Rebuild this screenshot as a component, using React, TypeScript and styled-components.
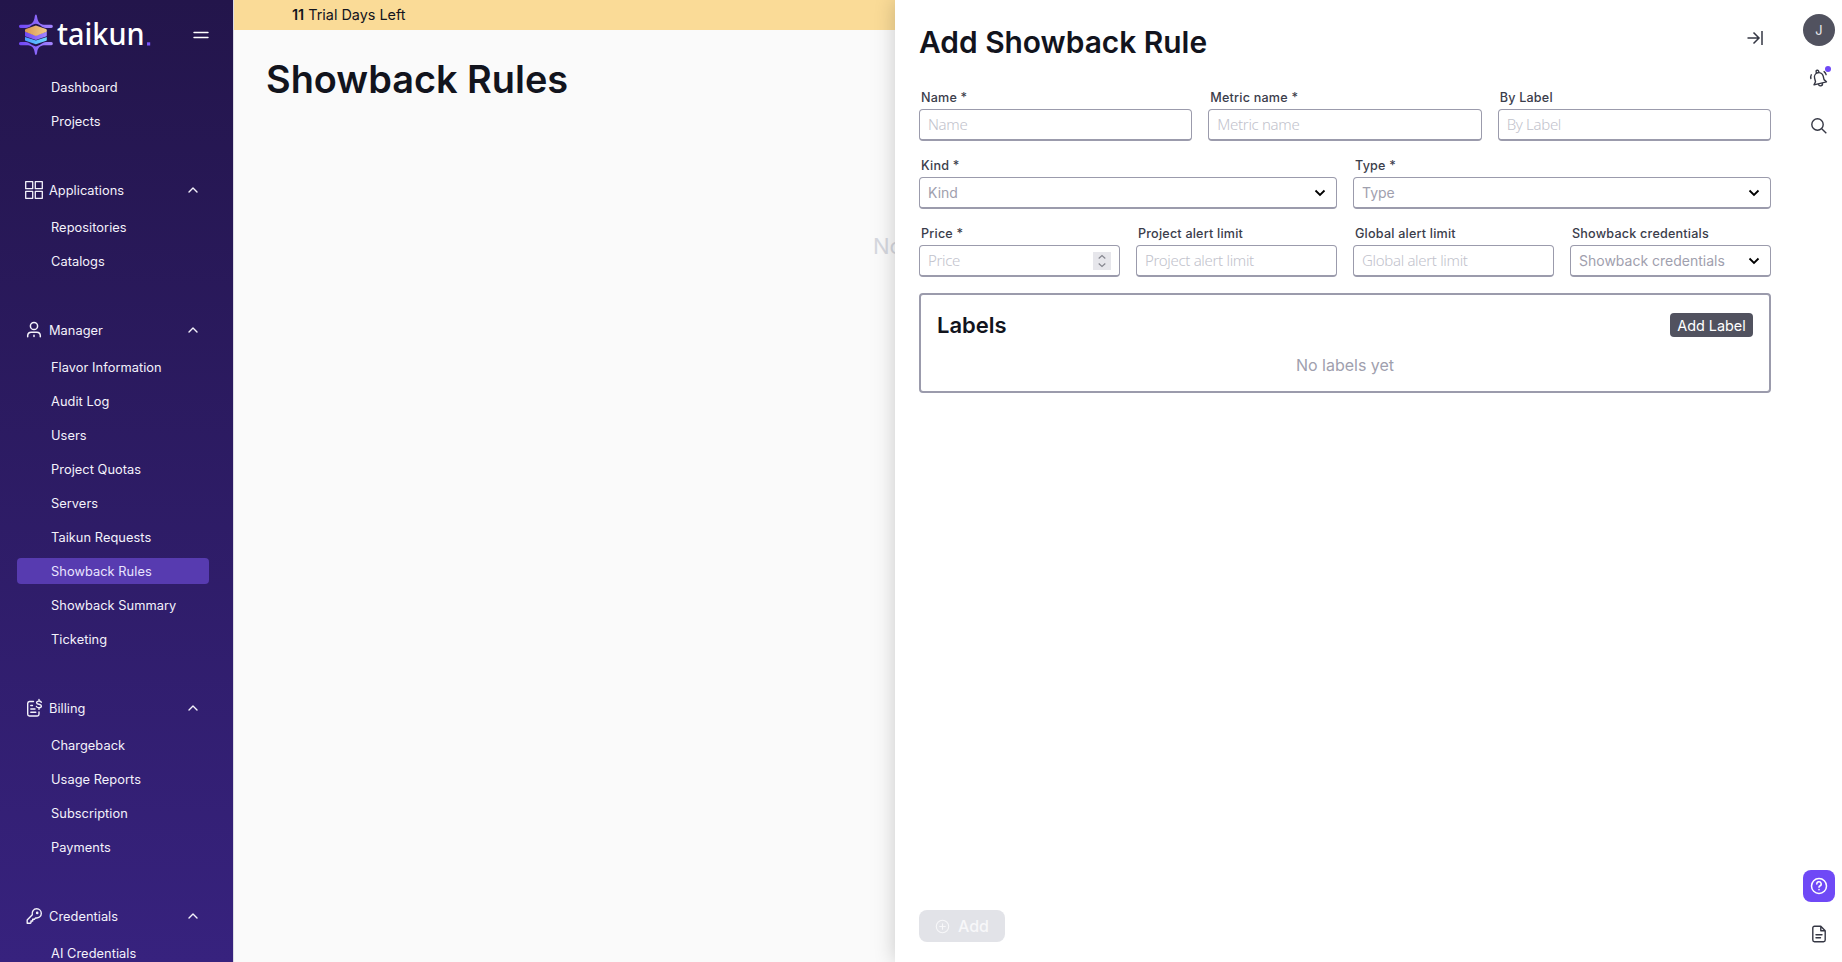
import React from 'react';
import styled, { createGlobalStyle, css } from 'styled-components';

const Global = createGlobalStyle`
  *, *::before, *::after { box-sizing: border-box; }
  html, body { margin: 0; padding: 0; }
  body { font-family: Inter, "Liberation Sans", sans-serif; color: #12141d; overflow: hidden; }
  button, input { font-family: inherit; }
`;

const Shell = styled.div`
  display: flex;
  width: 100%;
  height: 100vh;
  overflow: hidden;
  background: #fafafa;
`;

const Sidebar = styled.aside`
  flex: 0 0 234px;
  height: 100vh;
  overflow: hidden;
  border-right: 1px solid #dcdce4;
  background: linear-gradient(180deg, #23154b 0%, #37227e 100%);
  color: #fff;
`;

const Brand = styled.div`
  display: flex;
  align-items: center;
  justify-content: space-between;
  height: 74px;
  padding: 0 24px 4px 17px;
`;

const NavList = styled.nav`
  display: flex;
  flex-direction: column;
  gap: 8px;
  padding: 0 24px 0 17px;
  margin-bottom: 43px;
`;

const NavItem = styled.a<{ $active?: boolean }>`
  display: flex;
  align-items: center;
  height: 26px;
  padding-left: 34px;
  border-radius: 4px;
  font-size: 12.8px;
  letter-spacing: 0.06px;
  color: ${(p) => (p.$active ? '#e9e4ff' : '#f4f2fb')};
  background: ${(p) => (p.$active ? '#573bb0' : 'transparent')};
  white-space: nowrap;
`;

const SectionHead = styled.div`
  display: flex;
  align-items: center;
  height: 26px;
  margin-bottom: 11px;
  padding: 0 34px 0 24px;
  font-size: 12.8px;
  letter-spacing: 0.04px;
  color: #f4f2fb;

  > svg:first-child { flex: none; margin-right: 5px; }
  > svg:last-child { flex: none; margin-left: auto; }
`;

const Content = styled.main`
  flex: 1;
  min-width: 0;
  display: flex;
  flex-direction: column;
`;

const TrialBar = styled.div`
  flex: none;
  height: 30px;
  padding-left: 58px;
  background: #fadb97;
  font-size: 14.4px;
  line-height: 30px;
  b { font-weight: 600; }
`;

const PageTitle = styled.h1`
  margin: 23px 0 0 32px;
  font-size: 37.9px;
  line-height: 52px;
  font-weight: 600;
`;

const EmptyNote = styled.p`
  margin: 123px 0 0;
  padding-left: 639px;
  font-size: 22px;
  line-height: 36px;
  color: #d5d7de;
  white-space: nowrap;
  overflow: hidden;
`;

const Drawer = styled.section`
  position: absolute;
  top: 0;
  right: 0;
  width: 947px;
  height: 100vh;
  display: flex;
  background: #fff;
  box-shadow: 0 0 20px rgba(0, 0, 0, 0.2);
`;

const DrawerBody = styled.div`
  flex: 1;
  min-width: 0;
  display: flex;
  flex-direction: column;
  padding: 24px 0 20px 24px;
`;

const DrawerHead = styled.header`
  display: flex;
  justify-content: space-between;
  height: 66px;
  padding-right: 4px;
  > svg { margin-top: 2px; }
`;

const DrawerTitle = styled.h2`
  margin: 0;
  font-size: 29.9px;
  line-height: 36px;
  font-weight: 600;
`;

const FieldRow = styled.div<{ $cols: number }>`
  display: grid;
  grid-template-columns: repeat(${(p) => p.$cols}, minmax(0, 1fr));
  column-gap: 16px;
  height: 51px;
  margin-bottom: 17px;
  &:nth-of-type(3) { margin-bottom: 16px; }
`;

const FieldLabel = styled.label`
  display: block;
  height: 19px;
  padding-left: 2px;
  font-size: 12.6px;
  line-height: 16px;
  font-weight: 500;
  letter-spacing: 0.2px;
  color: #3b3d4b;
`;

const Control = styled.div`
  display: flex;
  align-items: center;
  justify-content: space-between;
  height: 32px;
  padding: 0 7px 0 8px;
  border: 1px solid #9b9bac;
  border-bottom-width: 2px;
  border-radius: 4px;
  background: #fff;
`;

const TextInput = styled.input`
  flex: 1;
  min-width: 0;
  height: 26px;
  padding: 0 0 2px;
  border: 0;
  outline: 0;
  background: transparent;
  font: 300 15px "Noto Sans", "Open Sans", sans-serif;
  letter-spacing: -0.32px;
  &::placeholder { color: #c1c2cc; opacity: 1; }
`;

const SelectValue = styled.span`
  font-size: 14px;
  color: #9fa0ae;
`;

const Spinner = styled.span`
  display: grid;
  place-items: center;
  width: 18px;
  height: 18px;
  margin-right: 1px;
  background: #e6e6eb;
`;

const LabelsBox = styled.section`
  height: 100px;
  padding: 18px 16px 0;
  border: 2px solid #9b9bac;
  border-radius: 4px;
`;

const LabelsHead = styled.div`
  display: flex;
  justify-content: space-between;
  h3 { margin: 0; font-size: 22px; line-height: 24px; font-weight: 600; }
`;

const SmallButton = styled.button`
  height: 24px;
  width: 83px;
  padding: 0;
  border: 0;
  border-radius: 4px;
  background: #51525f;
  color: #fff;
  font-size: 14.4px;
  font-weight: 400;
`;

const NoLabels = styled.p`
  margin: 16px 0 0;
  text-align: center;
  font-size: 16px;
  line-height: 24px;
  color: #9fa0ae;
`;

const AddButton = styled.button`
  display: flex;
  align-items: center;
  gap: 8px;
  width: 86px;
  height: 32px;
  margin-top: auto;
  padding: 0 0 0 16px;
  border: 0;
  border-radius: 8px;
  background: #e2e3e8;
  color: #f7f7f9;
  font-size: 16px;
  font-weight: 500;
`;

const Rail = styled.aside`
  flex: 0 0 71px;
  display: flex;
  flex-direction: column;
  align-items: flex-end;
  padding: 14px 7px 12px 0;
`;

const Avatar = styled.div`
  display: grid;
  place-items: center;
  width: 32px;
  height: 32px;
  border-radius: 50%;
  background: #51525f;
  color: #e9e9ee;
  font-size: 12.8px;
`;

const RailIcon = styled.div<{ $filled?: boolean; $push?: boolean }>`
  position: relative;
  display: grid;
  place-items: center;
  width: 32px;
  height: 32px;
  margin-top: ${(p) => (p.$push ? 'auto' : '16px')};
  ${(p) => p.$filled && css`background: #6f49f6; border-radius: 8px;`}
`;

const Dot = styled.i`
  position: absolute;
  top: 4px;
  right: 4px;
  width: 6px;
  height: 6px;
  border-radius: 50%;
  background: #6f49f6;
`;

const Logo = () => (
  <svg width="136" height="46" viewBox="0 0 136 46">
    <defs>
      <linearGradient id="wing" x1="0" x2="1"><stop offset="0" stopColor="#7047f5" /><stop offset="1" stopColor="#a486ff" /></linearGradient>
      <linearGradient id="gold" x1="0" x2="1"><stop offset="0" stopColor="#d99753" /><stop offset="1" stopColor="#f3cd86" /></linearGradient>
      <linearGradient id="sky" x1="0" x2="1"><stop offset="0" stopColor="#4b9bff" /><stop offset="1" stopColor="#6bd8ff" /></linearGradient>
    </defs>
    <path d="M3.500 12.800H11C15 12.500 17 9.500 17.600 5.500C17.900 3.500 18.200 2.500 18.900 2.500S19.900 3.500 20.200 5.500C20.800 9.500 22.800 12.500 26.800 12.800H34.300C36.300 12.800 36.300 16 34.300 16H29C25 15.800 22.500 11.800 18.900 11.700C15.300 11.800 12.800 15.800 8.800 16H3.500C1.500 16 1.500 12.800 3.500 12.800Z" fill="url(#wing)" />
    <path d="M3.500 33.300H11C15 33.600 17 36.100 17.600 40.100C17.900 42.100 18.200 43.100 18.900 43.100S19.900 42.100 20.200 40.100C20.800 36.100 22.800 33.600 26.800 33.300H34.300C36.300 33.300 36.300 30.100 34.300 30.100H29C25 30.300 22.500 34.300 18.900 34.400C15.300 34.300 12.800 30.300 8.800 30.100H3.500C1.500 30.100 1.500 33.300 3.500 33.300Z" fill="url(#wing)" />
    <path d="M8 25L18.900 28.500L29.800 25V28Q29.800 28.500 29.300 28.800L18.900 32.300L8.500 28.800Q8 28.500 8 28Z" fill="url(#sky)" />
    <path d="M8 19.500L18.900 23.500L29.800 19.500V23.500Q29.800 24.300 29 24.600L18.900 28L8.800 24.600Q8 24.300 8 23.500Z" fill="url(#wing)" />
    <path d="M18.900 13.600L29 16.900Q29.800 17.200 29.800 18V19Q29.800 19.800 29 20.100L18.900 23.900L8.800 20.100Q8 19.800 8 19V18Q8 17.200 8.800 16.900Z" fill="url(#gold)" />
    <text x="40" y="33.300" fill="#fff" fontFamily="'Noto Sans', sans-serif" fontWeight="500" fontSize="30" textLength="87.500" lengthAdjust="spacingAndGlyphs">taikun</text>
    <rect x="130" y="30.300" width="3.200" height="3.200" fill="#7c55fb" />
  </svg>
);

const stroke = { fill: 'none', stroke: 'currentColor', strokeLinecap: 'round', strokeLinejoin: 'round' } as const;

const MenuIcon = () => (
  <svg width="16" height="10" viewBox="0 0 16 10" {...stroke} strokeWidth="1.4"><path d="M1 2.500H15M1 7.500H15" /></svg>
);
const Caret = () => (
  <svg width="12" height="8" viewBox="0 0 12 8" {...stroke} strokeWidth="1.400"><path d="M2 6L6 2L10 6" /></svg>
);
const ChevronDown = () => (
  <svg width="18" height="10" viewBox="0 0 18 10" fill="none" stroke="#000" strokeWidth="1.800"><path d="M4.500 2.500L9 7L13.500 2.500" /></svg>
);
const GridIcon = () => (
  <svg width="20" height="20" viewBox="0 0 20 20" {...stroke} strokeWidth="1.300">
    {[[1.700, 1.700], [11.300, 1.700], [1.700, 11.300], [11.300, 11.300]].map(([x, y]) => <rect key={`${x}-${y}`} x={x} y={y} width="7" height="7" />)}
  </svg>
);
const PersonIcon = () => (
  <svg width="20" height="20" viewBox="0 0 20 20" {...stroke} strokeWidth="1.500">
    <circle cx="10" cy="6" r="3.600" /><path d="M3.700 16.700V15.500A3.500 3.500 0 0 1 7.200 12.200H12.800A3.500 3.500 0 0 1 16.300 15.500V16.700M10 15.300V16.500" />
  </svg>
);
const BillIcon = () => (
  <svg width="20" height="20" viewBox="0 0 20 20" {...stroke} strokeWidth="1.400">
    <path d="M9.500 3.500H5.500A2 2 0 0 0 3.700 5.500V16.300A1.700 1.700 0 0 0 5.400 18H13.300A1.700 1.700 0 0 0 15 16.300V14M6.800 7.500H8.500M6.800 11H11M6.800 14.300H11.800" />
    <path d="M17.300 4.300C16.800 2.600 12.600 2.600 12.600 4.700C12.600 6.900 17.400 5.700 17.400 8.100C17.400 10.200 13 10.200 12.400 8.400M15 1.500V3M15 9.800V11.300" />
  </svg>
);
const KeyIcon = () => (
  <svg width="20" height="20" viewBox="0 0 20 20" {...stroke} strokeWidth="1.400">
    <path d="M8.300 8.800C7.500 5.500 9.700 2.800 12.700 2.800A4.700 4.700 0 0 1 17.300 7.500C17.300 10.500 14.500 12.500 11.600 11.900L10.400 13.300H8.700V15H7V16.700L6.300 17.300H3.200V14Z" /><circle cx="13.200" cy="6.900" r=".6" />
  </svg>
);
const CollapseIcon = () => (
  <svg width="24" height="24" viewBox="0 0 24 24" fill="none" stroke="#353744" strokeWidth="1.500"><path d="M4.500 12H16.500M10.500 6.500L16 12L10.500 17.500M19 5V19" /></svg>
);
const SpinIcon = () => (
  <svg width="10" height="14" viewBox="0 0 10 14" fill="none" stroke="#85868f" strokeWidth="1.200"><path d="M1.700 4.500L5 1.500L8.300 4.500M1.700 9.500L5 12.500L8.300 9.500" /></svg>
);
const PlusCircle = () => (
  <svg width="15" height="15" viewBox="0 0 15 15" {...stroke} strokeWidth="1.100"><circle cx="7.500" cy="7.500" r="6.200" /><path d="M4.700 7.500H10.300M7.500 4.700V10.300" /></svg>
);
const BellIcon = () => (
  <svg width="20" height="20" viewBox="0 0 20 20" fill="none" stroke="#353744" strokeWidth="1.400" strokeLinecap="round" strokeLinejoin="round">
    <g transform="rotate(-14 10 10)">
      <path d="M3.500 15.500H16.300L14.500 12.800V9A4.400 4.400 0 0 0 5.700 9V12.800ZM8.700 4.500V3.300A1.300 1.300 0 0 1 11.300 3.300V4.500M8 16A2 2 0 0 0 12 16M3.300 5Q2 6.500 2 8.500M16.500 5Q17.700 6.500 17.700 8.500" />
    </g>
  </svg>
);
const SearchIcon = () => (
  <svg width="20" height="20" viewBox="0 0 20 20" fill="none" stroke="#353744" strokeWidth="1.400"><circle cx="8.500" cy="8.500" r="5.700" /><path d="M12.700 12.800L17.300 17.200" /></svg>
);
const HelpIcon = () => (
  <svg width="20" height="20" viewBox="0 0 20 20" {...stroke} stroke="#fff" strokeWidth="1.500"><circle cx="10" cy="10" r="7.500" /><path d="M7.800 8A2.200 2.200 0 1 1 10.800 10Q10 10.400 10 11.300M10 13.600V13.700" /></svg>
);
const FileIcon = () => (
  <svg width="20" height="20" viewBox="0 0 20 20" {...stroke} stroke="#353744" strokeWidth="1.400"><path d="M11.800 2.300H5.500A1.700 1.700 0 0 0 3.800 4V16A1.700 1.700 0 0 0 5.500 17.700H14.500A1.700 1.700 0 0 0 16.200 16V6.700ZM11.800 2.500V6.700H16M7 10.800H13M7 13.800H11.500" /></svg>
);

const sections = [
  { title: 'Applications', icon: <GridIcon />, items: ['Repositories', 'Catalogs'] },
  { title: 'Manager', icon: <PersonIcon />, items: ['Flavor Information', 'Audit Log', 'Users', 'Project Quotas', 'Servers', 'Taikun Requests', 'Showback Rules', 'Showback Summary', 'Ticketing'] },
  { title: 'Billing', icon: <BillIcon />, items: ['Chargeback', 'Usage Reports', 'Subscription', 'Payments'] },
  { title: 'Credentials', icon: <KeyIcon />, items: ['AI Credentials'] },
];

type FieldProps = { name: string; required?: boolean; kind?: 'text' | 'select' | 'number' };

const Field = ({ name, required, kind = 'text' }: FieldProps) => (
  <div>
    <FieldLabel>{name}{required && ' *'}</FieldLabel>
    <Control>
      {kind === 'select' ? <SelectValue>{name}</SelectValue> : <TextInput placeholder={name} />}
      {kind === 'select' && <ChevronDown />}
      {kind === 'number' && <Spinner><SpinIcon /></Spinner>}
    </Control>
  </div>
);

export default function App() {
  return (
    <Shell>
      <Global />
      <Sidebar>
        <Brand><Logo /><MenuIcon /></Brand>
        <NavList>
          <NavItem>Dashboard</NavItem>
          <NavItem>Projects</NavItem>
        </NavList>
        {sections.map((s) => (
          <React.Fragment key={s.title}>
            <SectionHead>{s.icon}{s.title}<Caret /></SectionHead>
            <NavList>
              {s.items.map((i) => <NavItem key={i} $active={i === 'Showback Rules'}>{i}</NavItem>)}
            </NavList>
          </React.Fragment>
        ))}
      </Sidebar>
      <Content>
        <TrialBar><b>11</b> Trial Days Left</TrialBar>
        <PageTitle>Showback Rules</PageTitle>
        <EmptyNote>No</EmptyNote>
      </Content>
      <Drawer>
        <DrawerBody>
          <DrawerHead><DrawerTitle>Add Showback Rule</DrawerTitle><CollapseIcon /></DrawerHead>
          <FieldRow $cols={3}>
            <Field name="Name" required />
            <Field name="Metric name" required />
            <Field name="By Label" />
          </FieldRow>
          <FieldRow $cols={2}>
            <Field name="Kind" required kind="select" />
            <Field name="Type" required kind="select" />
          </FieldRow>
          <FieldRow $cols={4}>
            <Field name="Price" required kind="number" />
            <Field name="Project alert limit" />
            <Field name="Global alert limit" />
            <Field name="Showback credentials" kind="select" />
          </FieldRow>
          <LabelsBox>
            <LabelsHead><h3>Labels</h3><SmallButton>Add Label</SmallButton></LabelsHead>
            <NoLabels>No labels yet</NoLabels>
          </LabelsBox>
          <AddButton disabled><PlusCircle />Add</AddButton>
        </DrawerBody>
        <Rail>
          <Avatar>J</Avatar>
          <RailIcon><BellIcon /><Dot /></RailIcon>
          <RailIcon><SearchIcon /></RailIcon>
          <RailIcon $filled $push><HelpIcon /></RailIcon>
          <RailIcon><FileIcon /></RailIcon>
        </Rail>
      </Drawer>
    </Shell>
  );
}
